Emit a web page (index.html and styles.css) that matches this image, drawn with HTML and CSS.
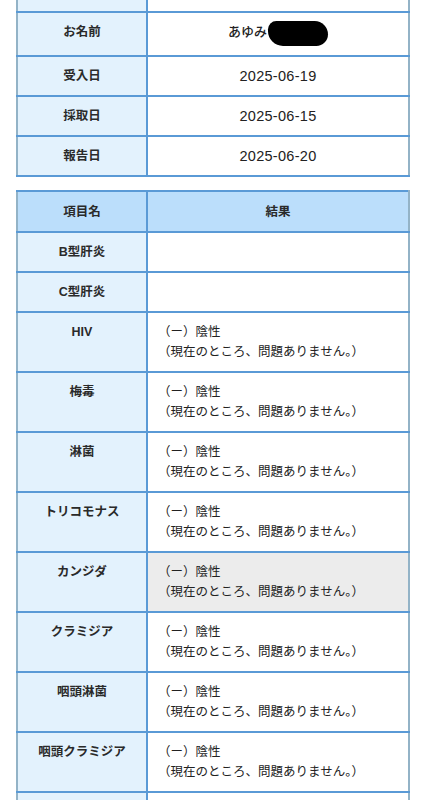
FILE: index.html
```html
<!DOCTYPE html>
<html lang="ja">
<head>
<meta charset="utf-8">
<title>検査結果</title>
<link rel="stylesheet" href="styles.css">
</head>
<body>
<main class="page">
  <table class="info">
    <colgroup><col class="c1"><col class="c2"></colgroup>
    <tr class="cut"><th></th><td></td></tr>
    <tr><th>お名前</th><td><span class="name">あゆみ</span><span class="mask"></span></td></tr>
    <tr><th>受入日</th><td class="date">2025-06-19</td></tr>
    <tr><th>採取日</th><td class="date">2025-06-15</td></tr>
    <tr><th>報告日</th><td class="date">2025-06-20</td></tr>
  </table>

  <table class="results">
    <colgroup><col class="c1"><col class="c2"></colgroup>
    <thead>
      <tr><th>項目名</th><th>結果</th></tr>
    </thead>
    <tbody>
      <tr><th>B型肝炎</th><td></td></tr>
      <tr><th>C型肝炎</th><td></td></tr>
      <tr><th>HIV</th><td>（ー）陰性<br>（現在のところ、問題ありません。）</td></tr>
      <tr><th>梅毒</th><td>（ー）陰性<br>（現在のところ、問題ありません。）</td></tr>
      <tr><th>淋菌</th><td>（ー）陰性<br>（現在のところ、問題ありません。）</td></tr>
      <tr><th>トリコモナス</th><td>（ー）陰性<br>（現在のところ、問題ありません。）</td></tr>
      <tr><th>カンジダ</th><td class="hl">（ー）陰性<br>（現在のところ、問題ありません。）</td></tr>
      <tr><th>クラミジア</th><td>（ー）陰性<br>（現在のところ、問題ありません。）</td></tr>
      <tr><th>咽頭淋菌</th><td>（ー）陰性<br>（現在のところ、問題ありません。）</td></tr>
      <tr><th>咽頭クラミジア</th><td>（ー）陰性<br>（現在のところ、問題ありません。）</td></tr>
      <tr class="tail"><th></th><td></td></tr>
    </tbody>
  </table>
</main>
</body>
</html>
```
FILE: styles.css
```css
html, body {
  margin: 0;
  padding: 0;
  background: #ffffff;
}
body {
  font-family: "Liberation Sans", "Noto Sans CJK JP", sans-serif;
  color: #222;
}
.page {
  display: flex;
  flex-direction: column;
  gap: 13px;
  padding: 0 17px 0 16px;
}
table {
  width: 394px;
  border-collapse: collapse;
  table-layout: fixed;
  border: 2px solid #93b3c7;
}
col.c1 {
  width: 130px;
}
.info {
  border-top: none;
}
th, td {
  border: 2px solid #5a9ad6;
  height: 20px;
  padding: 9px 10px;
  line-height: 20px;
  font-size: 12.5px;
  vertical-align: top;
  white-space: nowrap;
}
table th:first-child, table td:first-child {
  border-left-color: #93b3c7;
}
table th:last-child, table td:last-child {
  border-right-color: #93b3c7;
}
th {
  background: #e3f2fd;
  font-weight: 700;
  color: #2a2a2a;
  text-align: center;
}
.info td {
  background: #fff;
  text-align: center;
  font-size: 13px;
  font-weight: 500;
}
.info .cut th, .info .cut td {
  height: 11px;
  padding: 0;
  border-top: none;
  line-height: 11px;
}
.info .date {
  font-size: 14.5px;
  letter-spacing: 0.3px;
}
.name {
  display: inline-block;
  vertical-align: top;
}
.mask {
  display: inline-block;
  width: 60px;
  height: 25px;
  margin-left: 1px;
  margin-top: -1px;
  vertical-align: top;
  background: #000;
  border-radius: 10px 16px 14px 18px;
}
.results thead th {
  background: #bbdefb;
  padding: 10px 10px 9px;
}
.results td {
  background: #fff;
  text-align: left;
  font-size: 12.5px;
}
.results tbody tr:nth-child(-n+2) th {
  vertical-align: middle;
}
.results td.hl {
  background: #ececec;
}
```
